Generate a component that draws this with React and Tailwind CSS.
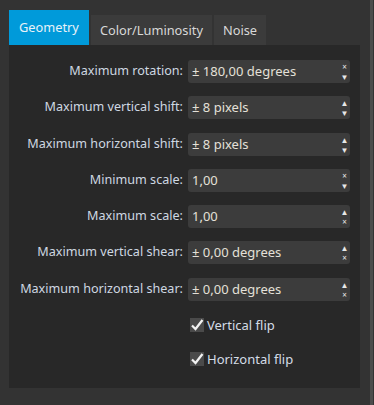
import { useState } from "react";

const rows = [
  { label: "Maximum rotation:", value: "± 180,00 degrees", top: "×", bottom: "▼" },
  { label: "Maximum vertical shift:", value: "± 8 pixels", top: "▲", bottom: "▼" },
  { label: "Maximum horizontal shift:", value: "± 8 pixels", top: "▲", bottom: "▼" },
  { label: "Minimum scale:", value: "1,00", top: "×", bottom: "▼" },
  { label: "Maximum scale:", value: "1,00", top: "▲", bottom: "×" },
  { label: "Maximum vertical shear:", value: "± 0,00 degrees", top: "▲", bottom: "×" },
  { label: "Maximum horizontal shear:", value: "± 0,00 degrees", top: "▲", bottom: "×" },
];

const tabs = ["Geometry", "Color/Luminosity", "Noise"];

function Check({ label }) {
  const [on, setOn] = useState(true);
  return (
    <label className="flex h-[34px] items-center gap-[3px] cursor-pointer" onClick={() => setOn(!on)}>
      <span className="flex h-[14px] w-[14px] items-center justify-center bg-[#4a4a4a]">
        {on && (
          <svg width="14" height="14" viewBox="0 0 14 14">
            <path d="M2 7.5 L5.5 11 L12.5 2" fill="none" stroke="#f2f2f2" strokeWidth="2.2" />
          </svg>
        )}
      </span>
      <span className="text-[13px] text-[#d4dce6]">{label}</span>
    </label>
  );
}

export default function App() {
  const [tab, setTab] = useState(0);
  return (
    <div
      className="flex h-[405px] w-[374px] bg-[#333333] text-[12.6px] leading-none"
      style={{ fontFamily: '"Noto Sans", "Open Sans", sans-serif' }}
    >
      <div className="flex flex-1 flex-col pl-[9px] pr-[10px] pt-[10px]">
        <div className="flex h-[35px] items-end gap-[2px] text-[12.8px]">
          {tabs.map((t, i) => (
            <button
              key={t}
              onClick={() => setTab(i)}
              className={
                i === tab
                  ? "flex h-[35px] items-center bg-[#009ada] px-[10px] text-[#e8f2f8]"
                  : "flex h-[30px] items-center bg-[#3b3b3b] px-[9px] text-[#d8d8d8]"
              }
            >
              {t}
            </button>
          ))}
        </div>
        <div className="flex h-[343px] flex-col bg-[#282828] pt-[15px]">
          {rows.map((r) => (
            <div key={r.label} className="flex h-[36.3px] items-start">
              <div className="w-[174px] pt-[5px] text-right text-[#cfd8e2]">{r.label}</div>
              <div className="ml-[5px] flex h-[23px] w-[162px] items-center rounded-[3px] bg-[#3c3c3c] pl-[4px] pr-[1px]">
                <span className="flex-1 text-[13px] text-[#e4e0d8]">{r.value}</span>
                <span className="flex w-[9px] flex-col items-center gap-[1px] text-[8px] leading-[9px] text-[#e8e8e8]">
                  <span>{r.top}</span>
                  <span>{r.bottom}</span>
                </span>
              </div>
            </div>
          ))}
          <div className="ml-[181px] -mt-[6px] flex flex-col">
            <Check label="Vertical flip" />
            <Check label="Horizontal flip" />
          </div>
        </div>
      </div>
      <div className="w-[3px] bg-[#4c4c4c] mr-[1px]" />
    </div>
  );
}
